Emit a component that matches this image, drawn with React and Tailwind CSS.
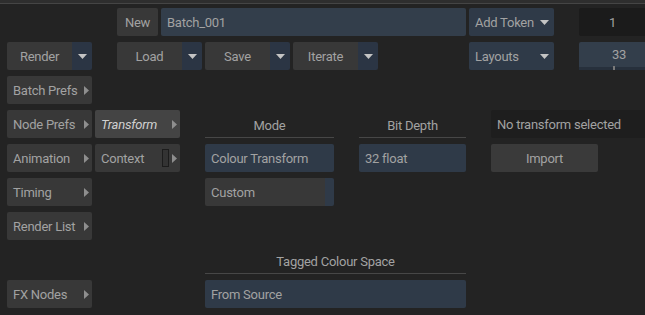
import React from "react";

const DownTri = () => (
  <svg width="9" height="5" viewBox="0 0 9 5" className="block">
    <polygon points="0,0 9,0 4.5,5" fill="#c4c4c4" />
  </svg>
);
const RightTri = () => (
  <svg width="5" height="9" viewBox="0 0 5 9" className="block">
    <polygon points="0,0 5,4.5 0,9" fill="#8e8e8e" />
  </svg>
);

const SideBtn = ({ label, active, children }) => (
  <div
    className={`w-[85px] h-[28px] shrink-0 rounded-[2px] flex items-center pl-[6px] pr-[3px] ${
      active ? "bg-[#444444] text-[#d0d0d0] italic" : "bg-[#383838] text-[#a2a2a2]"
    }`}
  >
    <span className="flex-1 whitespace-nowrap">{label}</span>
    {children}
    <RightTri />
  </div>
);

const SplitBtn = ({ label, w = 65 }) => (
  <div className="flex h-[28px] shrink-0 rounded-[2px] overflow-hidden">
    <div
      className="bg-[#383838] text-[#a2a2a2] flex items-center justify-center"
      style={{ width: w }}
    >
      {label}
    </div>
    <div className="w-[20px] bg-[#2b3544] flex items-center justify-center">
      <DownTri />
    </div>
  </div>
);

const BlueMenu = ({ label }) => (
  <div className="w-[85px] h-[28px] shrink-0 rounded-[2px] bg-[#2f3a48] text-[#a2a2a2] flex items-center pl-[6px] pr-[5px]">
    <span className="flex-1 whitespace-nowrap">{label}</span>
    <DownTri />
  </div>
);

const Label = ({ label, w }) => (
  <div
    className="h-[28px] shrink-0 flex items-center justify-center pt-[3px] border-b border-[#474747] text-[#a2a2a2] whitespace-nowrap"
    style={{ width: w }}
  >
    {label}
  </div>
);

export default function App() {
  return (
    <div
      className="w-[645px] h-[315px] overflow-hidden bg-[#232323] text-[13px] leading-none tracking-[-0.25px]"
      style={{ fontFamily: "Roboto, 'Liberation Sans', sans-serif" }}
    >
      <div className="h-[3px] bg-[#2e2e2e]" />
      <div className="h-[1px] bg-[#454545]" />
      <div className="pt-[4px] pl-[7px] flex flex-col gap-[6px]">
        {/* Row 1 */}
        <div className="flex h-[28px]">
          <div className="w-[110px] shrink-0" />
          <div className="w-[41px] h-[28px] shrink-0 rounded-[2px] bg-[#383838] text-[#a2a2a2] flex items-center justify-center">
            New
          </div>
          <div className="w-[305px] ml-[3px] h-[28px] shrink-0 rounded-[2px] bg-[#333e4b] text-[#a2a2a2] flex items-center pl-[6px]">
            Batch_001
          </div>
          <div className="ml-[3px]">
            <BlueMenu label="Add Token" />
          </div>
          <div className="ml-[25px] w-[82px] h-[28px] shrink-0 rounded-[2px] bg-[#1b1b1b] text-[#a2a2a2] flex items-center pl-[30px]">
            1
          </div>
        </div>
        {/* Row 2 */}
        <div className="flex h-[28px]">
          <SplitBtn label="Render" />
          <div className="ml-[25px]">
            <SplitBtn label="Load" />
          </div>
          <div className="ml-[3px]">
            <SplitBtn label="Save" />
          </div>
          <div className="ml-[3px]">
            <SplitBtn label="Iterate" />
          </div>
          <div className="ml-[91px]">
            <BlueMenu label="Layouts" />
          </div>
          <div className="ml-[25px] w-[82px] h-[28px] shrink-0 rounded-[2px] bg-[#333e4b] text-[#a2a2a2] flex flex-col">
            <div className="flex-1 flex items-center pl-[33px]">33</div>
            <div className="h-[3px] bg-[#27303c] relative">
              <div className="absolute left-[34px] -top-[1px] w-[2px] h-[4px] bg-[#7a7a7a]" />
            </div>
          </div>
        </div>
        {/* Row 3 */}
        <div className="flex h-[28px]">
          <SideBtn label="Batch Prefs" />
        </div>
        {/* Row 4 */}
        <div className="flex h-[28px]">
          <SideBtn label="Node Prefs" />
          <div className="ml-[3px]">
            <SideBtn label="Transform" active />
          </div>
          <div className="ml-[25px]">
            <Label label="Mode" w={129} />
          </div>
          <div className="ml-[25px]">
            <Label label="Bit Depth" w={107} />
          </div>
          <div className="ml-[25px] w-[170px] h-[28px] shrink-0 rounded-[2px] bg-[#1e1e1e] text-[#a2a2a2] flex items-center pl-[6px] whitespace-nowrap">
            No transform selected
          </div>
        </div>
        {/* Row 5 */}
        <div className="flex h-[28px]">
          <SideBtn label="Animation" />
          <div className="ml-[3px]">
            <SideBtn label="Context">
              <div className="w-[7px] h-[18px] mr-[3px] border border-[#1c1c1c] bg-[#333333]" />
            </SideBtn>
          </div>
          <div className="ml-[25px] w-[129px] h-[28px] shrink-0 rounded-[2px] bg-[#2f3a48] text-[#a2a2a2] flex items-center pl-[6px] whitespace-nowrap">
            Colour Transform
          </div>
          <div className="ml-[25px] w-[107px] h-[28px] shrink-0 rounded-[2px] bg-[#2f3a48] text-[#a2a2a2] flex items-center pl-[6px]">
            32 float
          </div>
          <div className="ml-[25px] w-[107px] h-[28px] shrink-0 rounded-[2px] bg-[#3a3a3a] text-[#a2a2a2] flex items-center justify-center">
            Import
          </div>
        </div>
        {/* Row 6 */}
        <div className="flex h-[28px]">
          <SideBtn label="Timing" />
          <div className="ml-[113px] w-[129px] h-[28px] shrink-0 rounded-[2px] overflow-hidden flex">
            <div className="flex-1 bg-[#383838] text-[#a2a2a2] flex items-center pl-[6px]">Custom</div>
            <div className="w-[9px] bg-[#2f3a48]" />
          </div>
        </div>
        {/* Row 7 */}
        <div className="flex h-[28px]">
          <SideBtn label="Render List" />
        </div>
        {/* Row 8 */}
        <div className="flex h-[28px]">
          <div className="ml-[198px]">
            <Label label="Tagged Colour Space" w={261} />
          </div>
        </div>
        {/* Row 9 */}
        <div className="flex h-[28px]">
          <SideBtn label="FX Nodes" />
          <div className="ml-[113px] w-[261px] h-[28px] shrink-0 rounded-[2px] bg-[#2f3a48] text-[#a2a2a2] flex items-center pl-[6px]">
            From Source
          </div>
        </div>
      </div>
    </div>
  );
}
